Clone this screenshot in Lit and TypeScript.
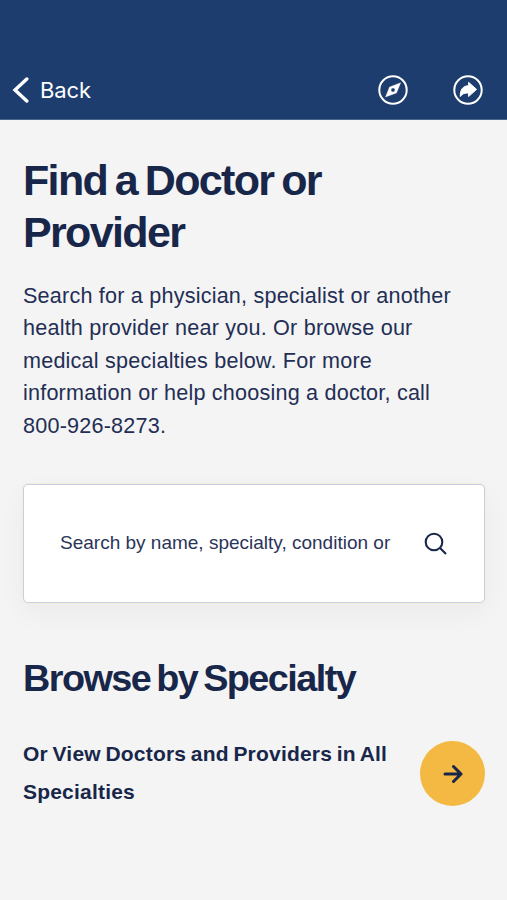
import { LitElement, html, css } from "lit";

class AppRoot extends LitElement {
  static styles = css`
    :host { display: block; height: 900px; overflow: hidden; background: #f4f4f4; color: #182749; font-family: "Liberation Sans", Arial, sans-serif; }
    * { box-sizing: border-box; }
    h1, h2, p { margin: 0; }
    header { height: 120px; padding: 60px 24px 0 12px; background: #1d3d6e; border-bottom: 1px solid #496488; color: #fff; display: flex; align-items: center; }
    .back { display: flex; align-items: center; gap: 11px; font: 22px/30px Inter, sans-serif; letter-spacing: -.1px; }
    .tools { margin-left: auto; display: flex; gap: 45px; }
    svg { display: block; }
    main { padding: 35px 22px 0 23px; }
    h1 { font-size: 43px; line-height: 51.5px; letter-spacing: -1.65px; word-spacing: -2.6px; }
    .intro { margin-top: 22px; font-size: 21.6px; line-height: 32.4px; letter-spacing: .2px; color: #232e54; }
    .line { display: block; white-space: nowrap; width: max-content; }
    .search { margin-top: 42px; height: 119px; border: 1px solid #c5d1df; border-radius: 5px; background: #fff; box-shadow: 0 0 0 1px #f3eddb, 0 10px 28px rgba(60,30,30,.045); padding: 0 37px 1px 36px; display: flex; align-items: center; justify-content: space-between; font-size: 19px; color: #2b3459; }
    h2 { margin-top: 50px; font-size: 37.8px; line-height: 50px; letter-spacing: -1.55px; word-spacing: -3px; }
    .all { margin-top: 32px; display: flex; align-items: flex-start; justify-content: space-between; }
    .label { font-weight: 700; font-size: 21px; line-height: 37.5px; letter-spacing: .2px; word-spacing: -1.4px; }
    .go { margin-top: 6px; width: 65px; height: 65px; border-radius: 50%; background: #f4b942; display: grid; place-items: center; }
  `;
  render() {
    return html`<header>
      <div class="back"><svg width="17" height="28" viewBox="0 0 17 28" fill="none" stroke="#fff" stroke-width="3.4" stroke-linecap="round"><path d="M14.8 3 3 14l11.8 11"/></svg><span class="line">Back</span></div>
      <div class="tools">
        <svg width="30" height="30" viewBox="0 0 30 30"><circle cx="15" cy="15" r="13.7" fill="none" stroke="#fff" stroke-width="2"/><path fill="#fff" stroke="#fff" stroke-width=".3" stroke-linejoin="round" fill-rule="evenodd" d="M22.7 7.7 18.5 18 7.5 22 11.5 12ZM15 13a2 2 0 1 0 0 4a2 2 0 0 0 0-4z"/></svg>
        <svg width="30" height="30" viewBox="0 0 30 30"><circle cx="15" cy="15" r="13.7" fill="none" stroke="#fff" stroke-width="2"/><path fill="#fff" stroke="#fff" stroke-width="1" stroke-linejoin="round" d="M15.6 7.3 23.6 14.4 15.6 21.5V18C11.5 17.8 9.2 18.8 7.3 21.5 7.1 14.8 9.8 10.8 15.6 10.7Z"/></svg>
      </div></header>
      <main>
        <h1><span class="line">Find a Doctor or</span><span class="line">Provider</span></h1>
        <p class="intro"><span class="line">Search for a physician, specialist or another</span><span class="line">health provider near you. Or browse our</span><span class="line">medical specialties below. For more</span><span class="line">information or help choosing a doctor, call</span><span class="line">800-926-8273.</span></p>
        <div class="search"><span class="line">Search by name, specialty, condition or</span><svg width="23" height="23" viewBox="0 0 23 23" fill="none" stroke="#182749" stroke-width="2.1"><circle cx="10" cy="10" r="8.3"/><path d="M16 16l6 6"/></svg></div>
        <h2><span class="line">Browse by Specialty</span></h2>
        <div class="all"><div class="label"><span class="line">Or View Doctors and Providers in All</span><span class="line">Specialties</span></div><div class="go"><svg width="20" height="20" viewBox="0 0 20 20" fill="none" stroke="#182749" stroke-width="3" stroke-linecap="round" stroke-linejoin="round"><path d="M2 10h16M10.5 2.5 18 10l-7.5 7.5"/></svg></div></div>
      </main>`;
  }
}
customElements.define("app-root", AppRoot);
